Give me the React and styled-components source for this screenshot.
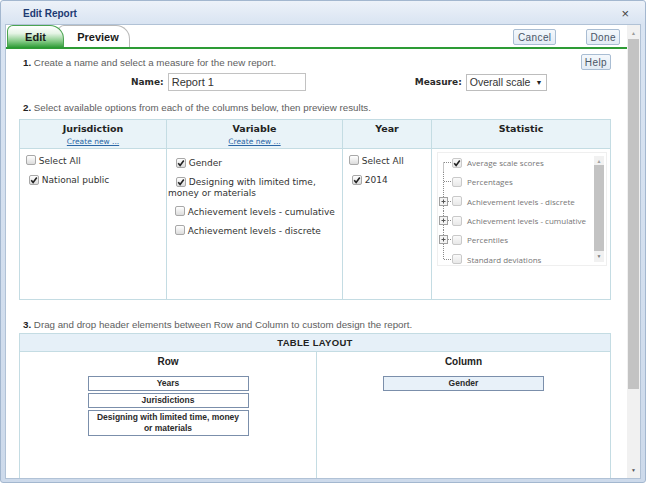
import React from "react";
import styled, { createGlobalStyle } from "styled-components";

const Global = createGlobalStyle`
  html, body {
    margin: 0;
    padding: 0;
    background: #ffffff;
  }
  * {
    box-sizing: border-box;
  }
`;

const Window = styled.div`
  width: 646px;
  height: 483px;
  display: flex;
  flex-direction: column;
  padding: 0 4px 3px 4px;
  border: 1px solid #a3b7cf;
  border-radius: 3px;
  background: linear-gradient(to bottom, #edf2f9 0px, #d9e4f2 23px, #cddaeb 100%);
  font-family: "Liberation Sans", Arial, sans-serif;
`;

const TitleBar = styled.div`
  height: 23px;
  display: flex;
  align-items: center;
  justify-content: space-between;
  padding: 2px 12px 0 18px;
`;

const Title = styled.div`
  font-size: 10px;
  font-weight: bold;
  color: #1d3a72;
`;

const Close = styled.div`
  font-size: 13px;
  color: #444;
  line-height: 1;
`;

const Client = styled.div`
  flex: 1;
  display: flex;
  min-height: 0;
  background: #ffffff;
  border: 1px solid #b1c2d6;
`;

const Main = styled.div`
  flex: 1;
  min-width: 0;
  overflow: hidden;
  display: flex;
  flex-direction: column;
`;

const TabBar = styled.div`
  height: 25px;
  display: flex;
  align-items: flex-end;
  justify-content: space-between;
  border-bottom: 2px solid #2d9b35;
  padding-left: 1px;
`;

const Tabs = styled.div`
  display: flex;
  align-items: flex-end;
`;

const Tab = styled.div`
  position: relative;
  height: 22px;
  display: flex;
  align-items: center;
  justify-content: center;
  font-size: 11px;
  font-weight: bold;
  color: #1a1a1a;
  border: 1px solid ${(p) => (p.$active ? "#4aa451" : "#b9b9b9")};
  border-bottom: none;
  border-radius: 6px 14px 0 0;
  z-index: ${(p) => (p.$active ? 2 : 1)};
  width: ${(p) => p.$width}px;
  margin-left: ${(p) => (p.$active ? 0 : -6)}px;
  padding-left: ${(p) => (p.$active ? 0 : 8)}px;
  background: ${(p) =>
    p.$active
      ? "linear-gradient(to bottom, #ffffff 0%, #e6f4e6 35%, #86cb88 72%, #35a03d 100%)"
      : "#ffffff"};
`;

const Actions = styled.div`
  display: flex;
  gap: 30px;
  align-self: center;
  margin-right: 7px;
  margin-top: 2px;
`;

const SmallButton = styled.div`
  height: 16px;
  padding: 0 ${(p) => p.$pad || 4}px;
  display: flex;
  align-items: center;
  font-size: 10px;
  letter-spacing: 0.4px;
  color: #4a5666;
  background: linear-gradient(to bottom, #f4f8fc, #e2ebf5);
  border: 1px solid #a9bdd3;
  border-radius: 2px;
`;

const Content = styled.div`
  padding: 5px 16px 0 13px;
  display: flex;
  flex-direction: column;
`;

const StepRow = styled.div`
  display: flex;
  align-items: center;
  justify-content: space-between;
`;

const Step = styled.div`
  margin-left: 4px;
  margin-top: ${(p) => p.$top || 0}px;
  font-size: 9.75px;
  color: #5e5e5e;
  b {
    color: #222;
  }
`;

const FieldRow = styled.div`
  display: flex;
  align-items: center;
  margin-top: 3px;
  height: 18px;
`;

const Field = styled.div`
  display: flex;
  align-items: center;
  gap: 4px;
  margin-left: ${(p) => p.$left || 0}px;
`;

const Label = styled.span`
  font-family: "DejaVu Sans", Verdana, sans-serif;
  font-size: 9px;
  font-weight: bold;
  color: #2a2a2a;
`;

const TextBox = styled.div`
  width: 138px;
  height: 18px;
  padding: 0 3px;
  display: flex;
  align-items: center;
  border: 1px solid #c2c2c2;
  font-size: 11px;
  color: #333;
`;

const Select = styled.div`
  height: 17px;
  padding: 0 4px 0 3px;
  display: flex;
  align-items: center;
  gap: 5px;
  border: 1px solid #bdbdbd;
  font-size: 10.5px;
  color: #333;
  span {
    font-size: 7px;
    color: #222;
  }
`;

const OptionsGrid = styled.div`
  margin-top: 6px;
  display: grid;
  grid-template-columns: 147px 176px 89px 1fr;
  grid-template-rows: 29px 151px;
  border-top: 1px solid #c4dce3;
  border-left: 1px solid #c4dce3;
`;

const HeadCell = styled.div`
  background: #e9f3f8;
  border-right: 1px solid #c4dce3;
  border-bottom: 1px solid #c4dce3;
  display: flex;
  flex-direction: column;
  align-items: center;
  padding-top: 3px;
  font-family: "DejaVu Sans", Verdana, sans-serif;
  font-size: 9.5px;
  font-weight: bold;
  color: #222;
`;

const CreateLink = styled.span`
  margin-top: 3px;
  font-size: 7.5px;
  font-weight: normal;
  color: #2a67a6;
  text-decoration: underline;
`;

const BodyCell = styled.div`
  border-right: 1px solid #c4dce3;
  border-bottom: 1px solid #c4dce3;
  padding: ${(p) => p.$pad || "6px 0 0 6px"};
  font-family: "DejaVu Sans", Verdana, sans-serif;
  font-size: 9px;
  color: #333;
`;

const Option = styled.div`
  margin-bottom: ${(p) => p.$gap ?? 8}px;
  padding-left: ${(p) => p.$indent || 0}px;
  line-height: 11px;
  white-space: ${(p) => (p.$wrap ? "normal" : "nowrap")};
`;

const Box = styled.span`
  display: inline-flex;
  align-items: center;
  justify-content: center;
  width: 10px;
  height: 10px;
  vertical-align: -1px;
  border: 1px solid ${(p) => (p.$light ? "#c9c9c9" : "#a8a8a8")};
  border-radius: 2px;
  background: ${(p) =>
    p.$light
      ? "linear-gradient(to bottom, #fafafa, #e8e8e8)"
      : "linear-gradient(to bottom, #ffffff, #dcdcdc)"};
`;

const Check = ({ checked, light }) => (
  <Box $light={light}>
    {checked && (
      <svg width="8" height="8" viewBox="0 0 8 8">
        <path d="M1.2 4.3 L3.1 6.4 L6.8 1.4" fill="none" stroke="#222" strokeWidth="1.6" />
      </svg>
    )}
  </Box>
);

const TreeBox = styled.div`
  height: 114px;
  display: flex;
  border: 1px solid #efefef;
  font-family: "Open Sans", sans-serif;
  font-size: 8px;
  color: #767676;
`;

const TreeList = styled.div`
  flex: 1;
  min-width: 0;
  overflow: hidden;
`;

const TreeItem = styled.div`
  height: 19.3px;
  display: flex;
  align-items: center;
  white-space: nowrap;
  ${Box} {
    margin-right: 5px;
  }
`;

const Connector = ({ first, last, plus }) => (
  <svg width="14" height="19" viewBox="0 0 14 19" style={{ flex: "none" }}>
    <line
      x1="5.5"
      y1={first ? 9.5 : 0}
      x2="5.5"
      y2={last ? 9.5 : 19}
      stroke="#8a8a8a"
      strokeDasharray="1 1"
    />
    <line x1="6" y1="9.5" x2="14" y2="9.5" stroke="#8a8a8a" strokeDasharray="1 1" />
    {plus && (
      <g>
        <rect x="1.5" y="5.5" width="8" height="8" fill="#f4f4f4" stroke="#a0a0a0" />
        <path d="M3.5 9.5 H7.5 M5.5 7.5 V11.5" stroke="#555" />
      </g>
    )}
  </svg>
);

const InnerScroll = styled.div`
  width: 10px;
  flex: none;
  margin: 3px 2px 3px 0;
  display: flex;
  flex-direction: column;
  align-items: center;
  background: #f1f1f1;
`;

const Arrow = styled.div`
  height: ${(p) => p.$h || 9}px;
  display: flex;
  align-items: center;
  justify-content: center;
  font-size: 5px;
  color: ${(p) => p.$color || "#7a7a7a"};
`;

const Thumb = styled.div`
  width: 100%;
  height: ${(p) => p.$h}px;
  background: #c3c3c3;
`;

const LayoutTable = styled.div`
  margin-top: 3px;
  height: 170px;
  display: grid;
  grid-template-columns: 297px 1fr;
  grid-template-rows: 18px 1fr;
  border: 1px solid #c4dce3;
`;

const LayoutHead = styled.div`
  grid-column: 1 / 3;
  background: #e6f0f8;
  border-bottom: 1px solid #c4dce3;
  display: flex;
  align-items: center;
  justify-content: center;
  font-size: 9.5px;
  font-weight: bold;
  letter-spacing: 0.3px;
  color: #222;
`;

const Zone = styled.div`
  display: flex;
  flex-direction: column;
  align-items: center;
  padding-top: 4px;
  border-right: ${(p) => (p.$divider ? "1px solid #c4dce3" : "none")};
`;

const ZoneTitle = styled.div`
  font-size: 10px;
  font-weight: bold;
  color: #222;
  margin-bottom: 9px;
`;

const Chip = styled.div`
  width: 161px;
  margin-bottom: 2px;
  min-height: 15px;
  padding: 1px 4px;
  display: flex;
  align-items: center;
  justify-content: center;
  text-align: center;
  font-size: 8.5px;
  font-weight: bold;
  line-height: 11px;
  color: #2a2a2a;
  background: ${(p) => (p.$filled ? "#e8f1f9" : "#ffffff")};
  border: 1px solid #7b8fab;
`;

const ScrollBar = styled.div`
  width: 13px;
  display: flex;
  flex-direction: column;
  align-items: center;
  background: #f1f1f1;
  padding: 2px 1px;
`;

export default function App() {
  return (
    <>
      <Global />
      <Window>
        <TitleBar>
          <Title>Edit Report</Title>
          <Close>×</Close>
        </TitleBar>
        <Client>
          <Main>
            <TabBar>
              <Tabs>
                <Tab $active $width={57}>Edit</Tab>
                <Tab $width={72}>Preview</Tab>
              </Tabs>
              <Actions>
                <SmallButton $pad={4}>Cancel</SmallButton>
                <SmallButton $pad={3}>Done</SmallButton>
              </Actions>
            </TabBar>
            <Content>
              <StepRow>
                <Step>
                  <b>1.</b> Create a name and select a measure for the new report.
                </Step>
                <SmallButton $pad={3}>Help</SmallButton>
              </StepRow>
              <FieldRow>
                <Field $left={112}>
                  <Label>Name:</Label>
                  <TextBox>Report 1</TextBox>
                </Field>
                <Field $left={109}>
                  <Label>Measure:</Label>
                  <Select>
                    Overall scale <span>▼</span>
                  </Select>
                </Field>
              </FieldRow>
              <Step $top={11}>
                <b>2.</b> Select available options from each of the columns below, then preview
                results.
              </Step>
              <OptionsGrid>
                <HeadCell>
                  Jurisdiction
                  <CreateLink>Create new ...</CreateLink>
                </HeadCell>
                <HeadCell>
                  Variable
                  <CreateLink>Create new ...</CreateLink>
                </HeadCell>
                <HeadCell>Year</HeadCell>
                <HeadCell>Statistic</HeadCell>

                <BodyCell>
                  <Option>
                    <Check /> Select All
                  </Option>
                  <Option $indent={3}>
                    <Check checked /> National public
                  </Option>
                </BodyCell>
                <BodyCell $pad="9px 4px 0 1px">
                  <Option $indent={8}>
                    <Check checked /> Gender
                  </Option>
                  <Option $wrap $gap={7}>
                    <span style={{ marginLeft: 8 }} />
                    <Check checked /> Designing with limited time, money or materials
                  </Option>
                  <Option $indent={7} $gap={7}>
                    <Check /> Achievement levels - cumulative
                  </Option>
                  <Option $indent={7}>
                    <Check /> Achievement levels - discrete
                  </Option>
                </BodyCell>
                <BodyCell $pad="6px 0 0 6px">
                  <Option>
                    <Check /> Select All
                  </Option>
                  <Option $indent={3}>
                    <Check checked /> 2014
                  </Option>
                </BodyCell>
                <BodyCell $pad="3px 3px 0 5px">
                  <TreeBox>
                    <TreeList>
                      <TreeItem>
                        <Connector first />
                        <Check checked light />
                        Average scale scores
                      </TreeItem>
                      <TreeItem>
                        <Connector />
                        <Check light />
                        Percentages
                      </TreeItem>
                      <TreeItem>
                        <Connector plus />
                        <Check light />
                        Achievement levels - discrete
                      </TreeItem>
                      <TreeItem>
                        <Connector plus />
                        <Check light />
                        Achievement levels - cumulative
                      </TreeItem>
                      <TreeItem>
                        <Connector plus />
                        <Check light />
                        Percentiles
                      </TreeItem>
                      <TreeItem>
                        <Connector last />
                        <Check light />
                        Standard deviations
                      </TreeItem>
                    </TreeList>
                    <InnerScroll>
                      <Arrow $color="#a0a0a0">▲</Arrow>
                      <Thumb $h={86} />
                      <Arrow>▼</Arrow>
                    </InnerScroll>
                  </TreeBox>
                </BodyCell>
              </OptionsGrid>
              <Step $top={19}>
                <b>3.</b> Drag and drop header elements between Row and Column to custom design
                the report.
              </Step>
              <LayoutTable>
                <LayoutHead>TABLE LAYOUT</LayoutHead>
                <Zone $divider>
                  <ZoneTitle>Row</ZoneTitle>
                  <Chip>Years</Chip>
                  <Chip>Jurisdictions</Chip>
                  <Chip>Designing with limited time, money or materials</Chip>
                </Zone>
                <Zone>
                  <ZoneTitle>Column</ZoneTitle>
                  <Chip $filled>Gender</Chip>
                </Zone>
              </LayoutTable>
            </Content>
          </Main>
          <ScrollBar>
            <Arrow $h={12} $color="#9a9a9a">▲</Arrow>
            <Thumb $h={350} />
            <div style={{ flex: 1 }} />
            <Arrow $h={12} $color="#555">▼</Arrow>
          </ScrollBar>
        </Client>
      </Window>
    </>
  );
}
